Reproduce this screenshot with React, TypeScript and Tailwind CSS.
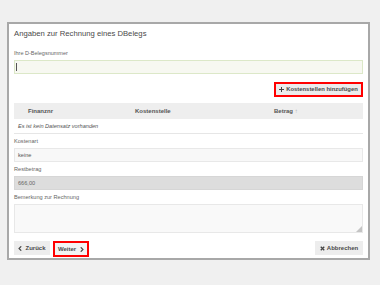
import { useState } from "react";

const font = { fontFamily: '"Liberation Sans", Arial, sans-serif' };

const Label = ({ children }: { children: string }) => (
  <div className="h-[14px] flex items-center text-[5.6px] text-[#666]">{children}</div>
);

export default function App() {
  const [note, setNote] = useState("");

  return (
    <div className="w-[380px] h-[285px] bg-[#f0f0f0] pt-[22px] pl-[7px]" style={font}>
      <div className="w-[363px] h-[238px] border-2 border-[#a8a8a8] bg-white px-[5px] flex flex-col">
        <div className="mt-[3px] h-[13px] flex items-center text-[7.7px] text-[#4a4a4a]">
          Angaben zur Rechnung eines DBelegs
        </div>

        <div className="mt-[8px] h-[11px] flex items-center text-[5.5px] text-[#666]">
          Ihre D-Belegsnummer
        </div>
        <div className="mt-[1px] h-[14px] border border-[#dce8c8] bg-[#f7f8f1] flex items-center pl-[1px]">
          <div className="w-px h-[8px] bg-[#555]"></div>
        </div>

        <div className="mt-[8px] flex justify-end">
          <div className="h-[15px] w-[89px] border-2 border-[#ff0000] bg-[#ececec] flex items-center justify-center gap-[2px] text-[5.9px] font-bold text-[#4a4a4a]">
            <svg width="5" height="5" viewBox="0 0 10 10">
              <path d="M4 0h2v4h4v2H6v4H4V6H0V4h4z" fill="#444" />
            </svg>
            <span>Kostenstellen hinzufügen</span>
          </div>
        </div>

        <div className="mt-[6px] h-[16px] bg-[#eeeeee] grid grid-cols-[107px_139px_1fr] items-center text-[6px] font-bold text-[#555]">
          <div className="pl-[14px]">Finanznr</div>
          <div className="pl-[14px]">Kostenstelle</div>
          <div className="pl-[14px]">
            Betrag <span className="text-[#aaa] font-normal">↑</span>
          </div>
        </div>
        <div className="h-[15px] border-b border-[#e6e6e6] flex items-center pl-[4px] text-[5.6px] italic text-[#555]">
          Es ist kein Datensatz vorhanden
        </div>

        <Label>Kostenart</Label>
        <div className="h-[14px] border border-[#e8e8e8] bg-[#f8f8f8] flex items-center pl-[3px] text-[5.6px] text-[#555]">
          keine
        </div>

        <Label>Restbetrag</Label>
        <div className="h-[14px] border border-[#d6d6d6] bg-[#dddddd] flex items-center pl-[3px] text-[5.6px] text-[#666]">
          666,00
        </div>

        <Label>Bemerkung zur Rechnung</Label>
        <div className="relative h-[29px]">
          <textarea
            value={note}
            onChange={(e) => setNote(e.target.value)}
            className="w-full h-full resize-none border border-[#e8e8e8] bg-[#f9f9f9] outline-none text-[5.6px] p-[2px] block"
          />
          <svg className="absolute right-[1px] bottom-[1px]" width="6" height="6" viewBox="0 0 6 6">
            <path d="M6 0V6H0z" fill="#c4c4c4" />
          </svg>
        </div>

        <div className="mt-[8px] flex items-start">
          <div className="h-[14px] w-[36px] bg-[#ededed] flex items-center justify-center gap-[3px] text-[6px] font-bold text-[#4a4a4a]">
            <svg width="4" height="5" viewBox="0 0 8 10">
              <path d="M6.5 0.5L2 5l4.5 4.5" fill="none" stroke="#444" strokeWidth="2.2" />
            </svg>
            <span>Zurück</span>
          </div>
          <div className="ml-[3px] h-[16px] w-[36px] border-2 border-[#ff0000] bg-[#f3f3f3] flex items-center justify-center gap-[4px] text-[6px] font-bold text-[#4a4a4a]">
            <span>Weiter</span>
            <svg width="4" height="5" viewBox="0 0 8 10">
              <path d="M1.5 0.5L6 5l-4.5 4.5" fill="none" stroke="#444" strokeWidth="2.2" />
            </svg>
          </div>
          <div className="ml-auto h-[14px] w-[48px] bg-[#ededed] flex items-center justify-center gap-[2px] text-[6px] font-semibold text-[#4a4a4a]">
            <svg width="5" height="5" viewBox="0 0 10 10">
              <path d="M1.5 1.5l7 7M8.5 1.5l-7 7" stroke="#444" strokeWidth="2.6" />
            </svg>
            <span>Abbrechen</span>
          </div>
        </div>
      </div>
    </div>
  );
}
